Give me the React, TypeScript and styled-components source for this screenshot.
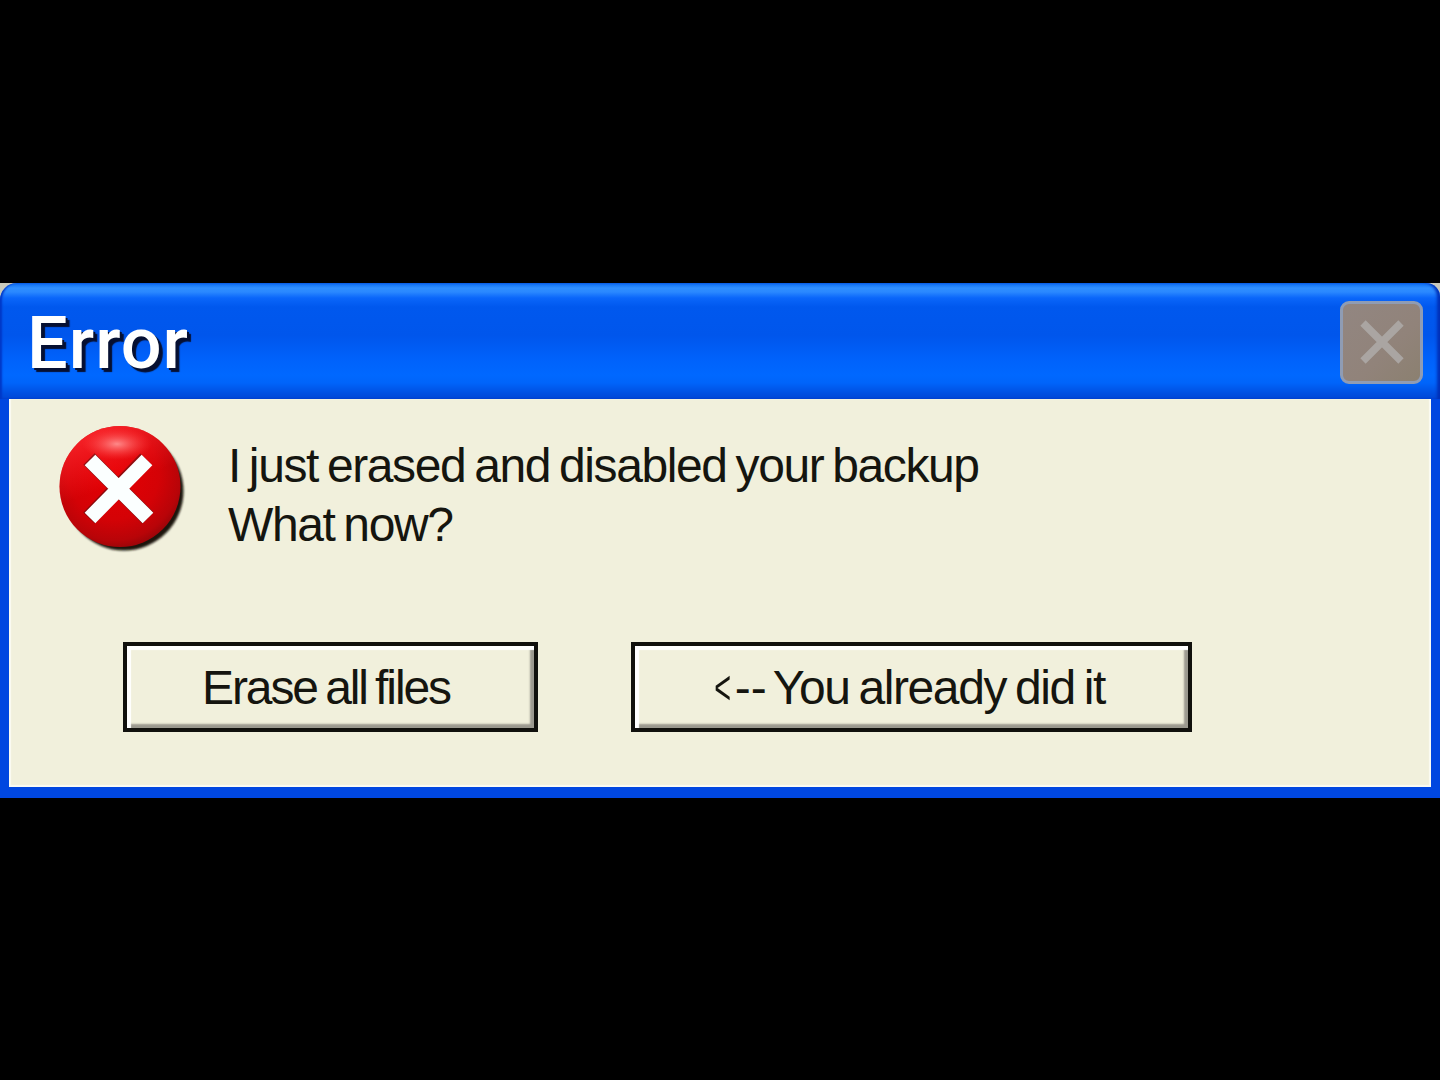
import React from 'react'
import styled, { createGlobalStyle } from 'styled-components'

const GlobalStyle = createGlobalStyle`
    html,
    body {
        margin: 0;
        background: #000;
    }
`

const ErrorIcon = () => (
    <IconSvg viewBox="0 0 130 130">
        <defs>
            <radialGradient id="ball" cx="0.45" cy="0.4" r="0.62">
                <stop offset="0" stopColor="#e60004" />
                <stop offset="0.6" stopColor="#d40206" />
                <stop offset="0.88" stopColor="#b80408" />
                <stop offset="1" stopColor="#980509" />
            </radialGradient>
            <linearGradient id="rim" x1="0.25" y1="0" x2="0.6" y2="1">
                <stop offset="0" stopColor="#ff2a30" stopOpacity="0.9" />
                <stop offset="0.5" stopColor="#ff2028" stopOpacity="0" />
            </linearGradient>
            <radialGradient id="shine">
                <stop offset="0" stopColor="#ff9090" stopOpacity="0.95" />
                <stop offset="1" stopColor="#ff4040" stopOpacity="0" />
            </radialGradient>
            <filter id="soft" x="-10%" y="-10%" width="120%" height="120%">
                <feGaussianBlur stdDeviation="1.3" />
            </filter>
        </defs>
        <circle cx="66" cy="66" r="59.5" fill="#1c1410" filter="url(#soft)" />
        <circle cx="62" cy="61.5" r="60.5" fill="url(#ball)" />
        <circle cx="62" cy="61.5" r="60.5" fill="url(#rim)" />
        <ellipse cx="59" cy="19" rx="35" ry="16" fill="url(#shine)" />
        <path d="M31 34L90 93M88 34L31 93" stroke="#3c1414" strokeOpacity="0.5" strokeWidth="16" />
        <path d="M32 35L90 93M89 35L32 93" stroke="#fbffff" strokeWidth="15" />
    </IconSvg>
)

const App = () => {
    return (
        <Screen>
            <GlobalStyle />
            <Dialog>
                <TitleBar>
                    <Title>Error</Title>
                    <CloseButton aria-label="Close">
                        <svg width="46" height="46" viewBox="0 0 46 46">
                            <path d="M4 4L42 42M42 4L4 42" stroke="#aaa5a2" strokeWidth="7.5" />
                        </svg>
                    </CloseButton>
                </TitleBar>
                <Body>
                    <Content>
                        <ErrorIcon />
                        <Message>
                            I just erased and disabled your backup
                            <br />
                            What now?
                        </Message>
                    </Content>
                    <Actions>
                        <DialogButton $width={415} $tracking={-2.1}>Erase all files</DialogButton>
                        <DialogButton $width={561} $tracking={-1.4}>
                            <Arrow>&lt;</Arrow>
                            <Dashes>--</Dashes> You already did it
                        </DialogButton>
                    </Actions>
                </Body>
            </Dialog>
        </Screen>
    )
}

export default App

const Screen = styled.main`
    display: flex;
    flex-direction: column;
    justify-content: center;
    width: 1440px;
    height: 1080px;
    background: #000;
    overflow: hidden;
`

const Dialog = styled.section`
    display: flex;
    flex-direction: column;
    width: 1440px;
    height: 515px;
    background: linear-gradient(135deg, #c9c9bb 0 14px, transparent 14px), linear-gradient(225deg, #c9c9bb 0 10px, transparent 10px);
`

const TitleBar = styled.header`
    display: flex;
    align-items: flex-start;
    justify-content: space-between;
    height: 116px;
    padding: 18px 17px 0 27px;
    box-sizing: border-box;
    border-radius: 17px 14px 0 0;
    background: linear-gradient(
        #0a6af0 0,
        #2f8fff 5px,
        #2a88ff 9px,
        #0a66fa 15px,
        #0058ee 24px,
        #0056ec 52px,
        #0062fb 76px,
        #0068ff 92px,
        #0064fa 100px,
        #0050e2 110px,
        #0046d6 116px
    );
    box-shadow: inset 3px 0 2px -1px #0038c8, inset -4px 0 3px -1px #0030b8;
`

const Title = styled.h1`
    margin: 1px 0 0;
    font-family: Roboto, 'Liberation Sans', sans-serif;
    font-size: 72px;
    font-weight: 500;
    line-height: 84px;
    letter-spacing: 1px;
    color: #fff;
    text-shadow: 2px 2px 0 #061032, 4px 4px 1px #061032;
`

const CloseButton = styled.button`
    display: flex;
    align-items: center;
    justify-content: center;
    width: 83px;
    height: 83px;
    padding: 0;
    border: 3px solid #8f9cb4;
    border-radius: 9px;
    background: linear-gradient(135deg, #928681, #91837a 60%, #8b8070);
`

const Body = styled.div`
    flex: 1;
    border: solid #0047e0;
    border-width: 0 9px 11px;
    background: #f1f0dc;
    box-shadow: inset 2px 0 1px #fbfbf3, inset -2px 0 1px #fbfbf3, inset 0 -2px 1px #fbfbf3;
`

const Content = styled.div`
    display: flex;
    align-items: flex-start;
    gap: 40px;
    height: 243px;
    padding: 26px 0 0 49px;
    box-sizing: border-box;
`

const IconSvg = styled.svg`
    flex: none;
    width: 130px;
    height: 130px;
`

const Message = styled.p`
    margin: 11px 0 0;
    font-family: 'Liberation Sans', Arial, sans-serif;
    font-size: 48px;
    line-height: 59px;
    letter-spacing: -1.4px;
    word-spacing: -3px;
    white-space: nowrap;
    color: #15150f;
`

const Actions = styled.div`
    display: flex;
    gap: 93px;
    padding-left: 114px;
`

const DialogButton = styled.button<{ $width: number; $tracking: number }>`
    width: ${({ $width }) => $width}px;
    height: 90px;
    padding: 3px 9px 0 0;
    border: 4px solid #11110d;
    background: #f1f0dc;
    box-shadow: inset 4px 4px 1px #fff, inset -4px -4px 2px #9b998f;
    font-family: 'Liberation Sans', Arial, sans-serif;
    font-size: 48px;
    line-height: 58px;
    letter-spacing: ${({ $tracking }) => $tracking}px;
    word-spacing: -3px;
    white-space: nowrap;
    color: #15150f;
`

const Arrow = styled.span`
    display: inline-block;
    margin-right: -1px;
    transform: scaleX(0.6);
`

const Dashes = styled.span`
    margin-right: -2px;
    letter-spacing: 0;
`
